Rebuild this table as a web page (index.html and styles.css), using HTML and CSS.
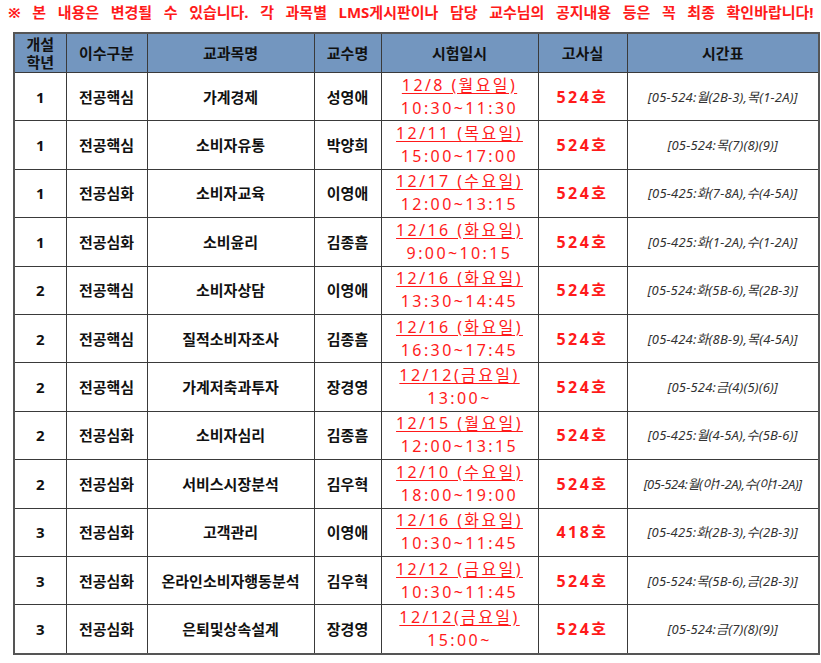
FILE: index.html
```html
<!DOCTYPE html>
<html lang="ko">
<head>
<meta charset="utf-8">
<title>시험일정</title>
<link rel="stylesheet" href="styles.css">
</head>
<body>
<p class="notice">※ 본 내용은 변경될 수 있습니다. 각 과목별 LMS게시판이나 담당 교수님의 공지내용 등은 꼭 최종 확인바랍니다!</p>
<table class="exam">
  <colgroup>
    <col class="c1"><col class="c2"><col class="c3"><col class="c4"><col class="c5"><col class="c6"><col class="c7">
  </colgroup>
  <thead>
    <tr><th class="two"><span class="ln">개설</span><span class="ln">학년</span></th><th>이수구분</th><th>교과목명</th><th>교수명</th><th>시험일시</th><th>고사실</th><th>시간표</th></tr>
  </thead>
  <tbody>
    <tr><td>1</td><td>전공핵심</td><td>가계경제</td><td>성영애</td><td class="date"><span class="d">12/8 (월요일)</span><span class="t">10:30~11:30</span></td><td class="room">524호</td><td class="tt">[05-524:월(2B-3),목(1-2A)]</td></tr>
    <tr><td>1</td><td>전공핵심</td><td>소비자유통</td><td>박양희</td><td class="date"><span class="d">12/11 (목요일)</span><span class="t">15:00~17:00</span></td><td class="room">524호</td><td class="tt">[05-524:목(7)(8)(9)]</td></tr>
    <tr><td>1</td><td>전공심화</td><td>소비자교육</td><td>이영애</td><td class="date"><span class="d">12/17 (수요일)</span><span class="t">12:00~13:15</span></td><td class="room">524호</td><td class="tt">[05-425:화(7-8A),수(4-5A)]</td></tr>
    <tr><td>1</td><td>전공심화</td><td>소비윤리</td><td>김종흠</td><td class="date"><span class="d">12/16 (화요일)</span><span class="t">9:00~10:15</span></td><td class="room">524호</td><td class="tt">[05-425:화(1-2A),수(1-2A)]</td></tr>
    <tr><td>2</td><td>전공핵심</td><td>소비자상담</td><td>이영애</td><td class="date"><span class="d">12/16 (화요일)</span><span class="t">13:30~14:45</span></td><td class="room">524호</td><td class="tt">[05-524:화(5B-6),목(2B-3)]</td></tr>
    <tr><td>2</td><td>전공핵심</td><td>질적소비자조사</td><td>김종흠</td><td class="date"><span class="d">12/16 (화요일)</span><span class="t">16:30~17:45</span></td><td class="room">524호</td><td class="tt">[05-424:화(8B-9),목(4-5A)]</td></tr>
    <tr><td>2</td><td>전공핵심</td><td>가계저축과투자</td><td>장경영</td><td class="date"><span class="d">12/12(금요일)</span><span class="t">13:00~</span></td><td class="room">524호</td><td class="tt">[05-524:금(4)(5)(6)]</td></tr>
    <tr><td>2</td><td>전공심화</td><td>소비자심리</td><td>김종흠</td><td class="date"><span class="d">12/15 (월요일)</span><span class="t">12:00~13:15</span></td><td class="room">524호</td><td class="tt">[05-425:월(4-5A),수(5B-6)]</td></tr>
    <tr><td>2</td><td>전공심화</td><td>서비스시장분석</td><td>김우혁</td><td class="date"><span class="d">12/10 (수요일)</span><span class="t">18:00~19:00</span></td><td class="room">524호</td><td class="tt narrow">[05-524:월(야1-2A),수(야1-2A)]</td></tr>
    <tr><td>3</td><td>전공심화</td><td>고객관리</td><td>이영애</td><td class="date"><span class="d">12/16 (화요일)</span><span class="t">10:30~11:45</span></td><td class="room">418호</td><td class="tt">[05-425:화(2B-3),수(2B-3)]</td></tr>
    <tr><td>3</td><td>전공심화</td><td>온라인소비자행동분석</td><td>김우혁</td><td class="date"><span class="d">12/12 (금요일)</span><span class="t">10:30~11:45</span></td><td class="room">524호</td><td class="tt">[05-524:목(5B-6),금(2B-3)]</td></tr>
    <tr><td>3</td><td>전공심화</td><td>은퇴및상속설계</td><td>장경영</td><td class="date"><span class="d">12/12(금요일)</span><span class="t">15:00~</span></td><td class="room">524호</td><td class="tt">[05-524:금(7)(8)(9)]</td></tr>
  </tbody>
</table>
</body>
</html>
```
FILE: styles.css
```css
html, body {
  margin: 0;
  padding: 0;
  background: #ffffff;
}
body {
  font-family: "Noto Sans", "Noto Sans CJK KR", sans-serif;
  color: #111;
}
.notice {
  margin: 0;
  padding: 3px 0 0 8px;
  height: 29px;
  box-sizing: border-box;
  font-size: 15px;
  line-height: 19px;
  font-weight: bold;
  color: #ff1a1a;
  word-spacing: 7.7px;
  white-space: nowrap;
}
.exam {
  margin-left: 13px;
  margin-top: 3px;
  border-collapse: collapse;
  table-layout: fixed;
  width: 805px;
  border: 2px solid #555;
}
.c1 { width: 52px; }
.c2 { width: 81px; }
.c3 { width: 167px; }
.c4 { width: 67px; }
.c5 { width: 157px; }
.c6 { width: 89px; }
.c7 { width: 192px; }
.exam th, .exam td {
  border: 1px solid #3a3a3a;
  padding: 0;
  text-align: center;
  vertical-align: middle;
  white-space: nowrap;
}
.exam th {
  background: #7396bf;
  height: 38px;
  font-size: 15px;
  line-height: 18px;
  font-weight: bold;
  color: #111;
}
.exam th.two .ln {
  display: block;
  line-height: 18.5px;
}
.exam td {
  height: 47.4px;
  font-size: 15px;
  line-height: 20px;
  font-weight: bold;
  color: #111;
}
.exam td.date {
  color: #ff1a1a;
  font-weight: normal;
  font-size: 16px;
  letter-spacing: 2.4px;
}
.date .d, .date .t {
  display: block;
  line-height: 23px;
}
.date .d {
  text-decoration: underline;
  text-underline-offset: 2px;
}
.exam td.room {
  color: #ff1a1a;
  font-size: 16px;
  letter-spacing: 2.5px;
}
.exam td.tt {
  font-weight: normal;
  font-style: italic;
  font-size: 13px;
  color: #333;
  letter-spacing: 0.2px;
}
.exam td.tt.narrow {
  letter-spacing: -0.4px;
}
```
